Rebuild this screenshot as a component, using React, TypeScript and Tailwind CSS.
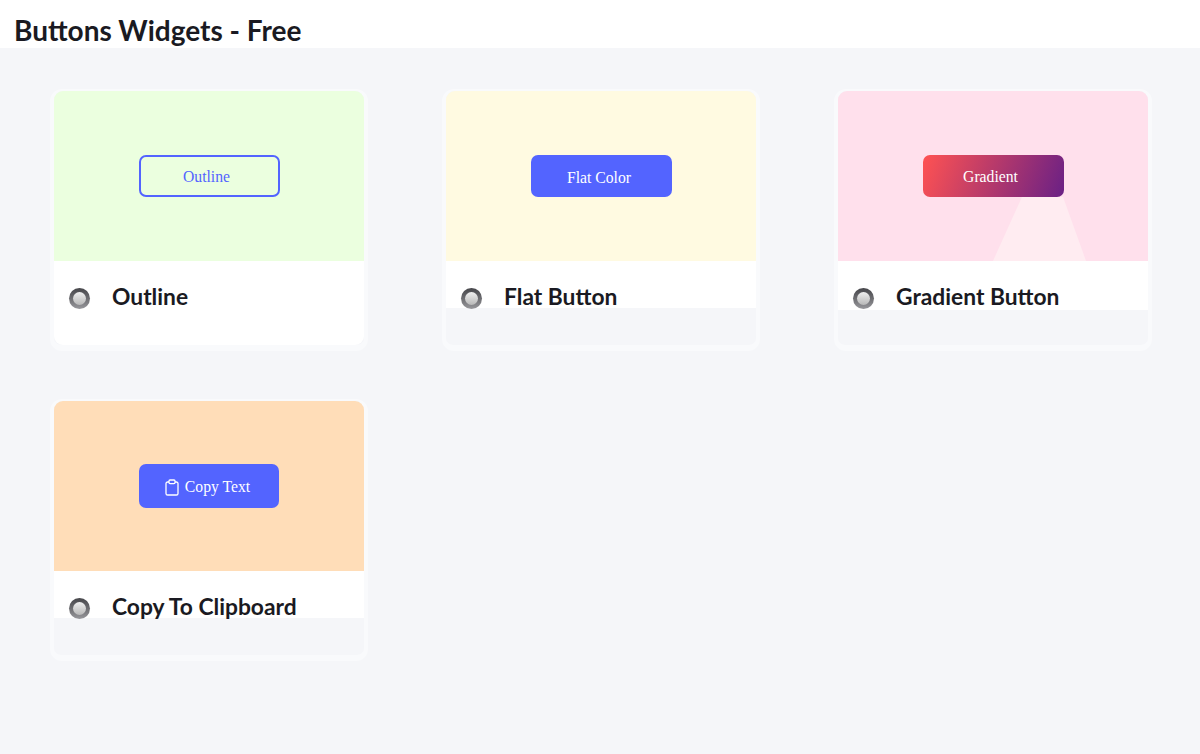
import { ReactNode } from "react";

const Radio = () => (
  <span className="relative z-10 mt-[4px] block size-[21px] shrink-0 rounded-full bg-gradient-to-b from-[#46464a] to-[#98989c] p-1">
    <span className="block size-full rounded-full bg-gradient-to-b from-[#f0f0f0] to-[#b8b8b8]" />
  </span>
);

const ClipboardIcon = () => (
  <svg width="14" height="17" viewBox="0 0 14 17" fill="none" stroke="currentColor" strokeWidth="1.3" strokeLinejoin="round">
    <path d="M4 3H2.6A1.6 1.6 0 0 0 1 4.6v9.8A1.6 1.6 0 0 0 2.6 16h8.8a1.6 1.6 0 0 0 1.6-1.6V4.6A1.6 1.6 0 0 0 11.4 3H10" />
    <rect x="4" y="1" width="6" height="3.6" rx="1" />
  </svg>
);

const Card = ({
  title,
  bg,
  top = "pt-[64px]",
  foot = "h-[84px]",
  children,
}: {
  title: string;
  bg: string;
  top?: string;
  foot?: string;
  children: ReactNode;
}) => (
  <div className="h-[262px] rounded-[12px] border-x-4 border-t-2 border-b-[6px] border-[#f9fafc]">
    <div className="flex h-[254px] flex-col overflow-hidden rounded-[9px] bg-[#f5f6f9]">
      <div className={`relative flex h-[170px] shrink-0 justify-center overflow-hidden ${top} ${bg}`}>
        {children}
      </div>
      <div className={`shrink-0 bg-white pl-[15px] pt-[15px] ${foot}`}>
        <div className="flex h-10 items-center">
          <Radio />
          <h2 className="ml-[22px] text-[22.8px] leading-10 font-bold text-[#1a1a22]">{title}</h2>
        </div>
      </div>
    </div>
  </div>
);

export default function App() {
  return (
    <div className="min-h-[754px] bg-[#f5f6f9] font-['Lato',sans-serif]">
      <header className="h-12 bg-white pl-[14px]">
        <h1 className="text-[28px] leading-[60px] font-bold text-[#1a1a22]">Buttons Widgets - Free</h1>
      </header>
      <main className="grid grid-cols-[318px_318px_318px] gap-x-[74px] gap-y-[48px] pt-[41px] pl-[50px]">
        <Card title="Outline" bg="bg-[#ebffdf]">
          <button className="h-[42px] w-[141px] rounded-[7px] border-2 border-[#5364ff] pt-[1px] pr-[5px] font-['Liberation_Serif',serif] text-[15.7px] text-[#5364ff]">
            Outline
          </button>
        </Card>
        <Card title="Flat Button" bg="bg-[#fffae1]" foot="h-[47px]">
          <button className="h-[42px] w-[141px] rounded-[7px] bg-[#5364ff] pt-[3px] pr-[4px] font-['Liberation_Serif',serif] text-[15.7px] text-white">
            Flat Color
          </button>
        </Card>
        <Card title="Gradient Button" bg="bg-[#ffe0ec]" foot="h-[49px]">
          <button className="relative z-10 h-[42px] w-[141px] rounded-[7px] bg-[linear-gradient(110deg,#ff5252,#6a2085)] pt-[2px] pr-[5px] font-['Liberation_Serif',serif] text-[15.7px] text-white">
            Gradient
          </button>
          <svg className="absolute top-[106px] left-[155px]" width="93" height="64" viewBox="0 0 93 64">
            <path d="M29 0H70L93 64H0Z" fill="#ffecf1" />
          </svg>
        </Card>
        <Card title="Copy To Clipboard" bg="bg-[#ffddb8]" top="pt-[63px]" foot="h-[47px]">
          <button className="flex h-11 w-[140px] items-center justify-center gap-[6px] rounded-[7px] bg-[#5364ff] pt-[2px] pr-[3px] font-['Liberation_Serif',serif] text-[15.7px] text-white">
            <ClipboardIcon />
            Copy Text
          </button>
        </Card>
      </main>
    </div>
  );
}
